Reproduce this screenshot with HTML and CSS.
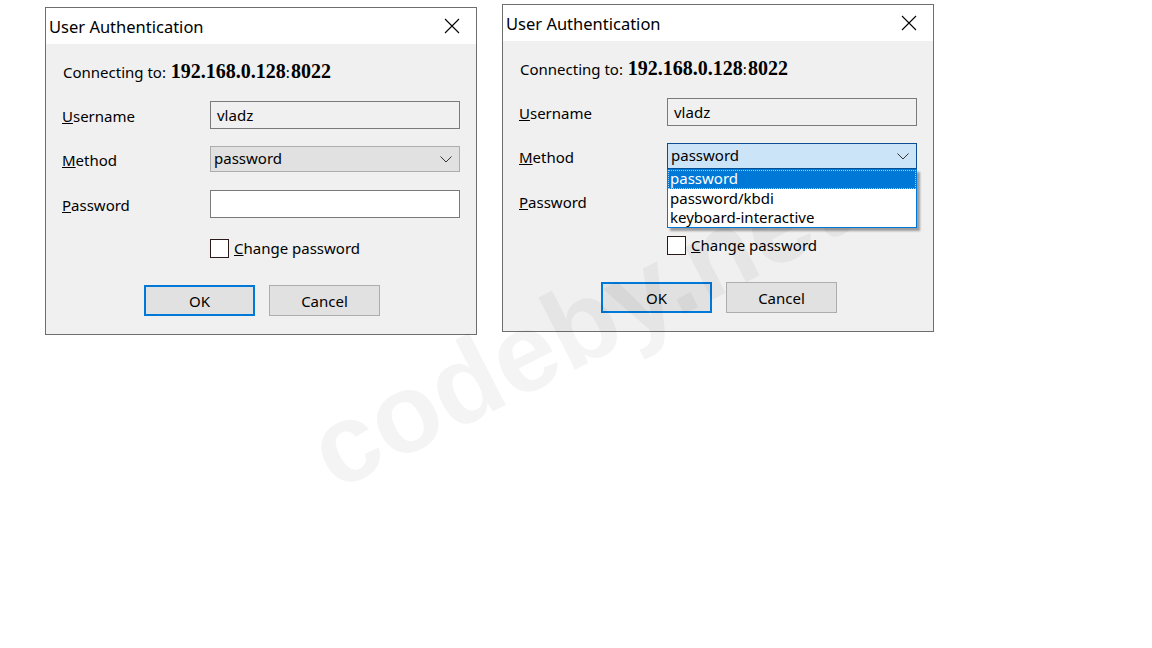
FILE: index.html
```html
<!DOCTYPE html>
<html>
<head>
<meta charset="utf-8">
<link rel="stylesheet" href="styles.css">
</head>
<body>
<div class="screen">
  <div class="dialog d1">
    <div class="titlebar">
      <span class="title">User Authentication</span>
      <svg class="close" width="16" height="16" viewBox="0 0 16 16"><path d="M1 1 L15 15 M15 1 L1 15" stroke="#000" stroke-width="1.1" fill="none"/></svg>
    </div>
    <div class="content">
      <div class="conn">Connecting to: <b>192.168.0.128</b>:<b>8022</b></div>
      <div class="row r-user"><label class="lbl"><u>U</u>sername</label><div class="field edit ro">vladz</div></div>
      <div class="row r-method"><label class="lbl"><u>M</u>ethod</label>
        <div class="field combo"><span>password</span>
          <svg class="chev" width="12" height="7" viewBox="0 0 12 7"><path d="M0.5 0.5 L6 6 L11.5 0.5" stroke="#333" stroke-width="1" fill="none"/></svg>
        </div>
      </div>
      <div class="row r-pass"><label class="lbl"><u>P</u>assword</label><div class="field edit wh"></div></div>
      <div class="checkrow"><span class="box"></span><span class="ctext"><u>C</u>hange password</span></div>
      <div class="buttons"><div class="btn default">OK</div><div class="btn">Cancel</div></div>
    </div>
  </div>

  <div class="dialog d2">
    <div class="titlebar">
      <span class="title">User Authentication</span>
      <svg class="close" width="16" height="16" viewBox="0 0 16 16"><path d="M1 1 L15 15 M15 1 L1 15" stroke="#000" stroke-width="1.1" fill="none"/></svg>
    </div>
    <div class="content">
      <div class="conn">Connecting to: <b>192.168.0.128</b>:<b>8022</b></div>
      <div class="row r-user"><label class="lbl"><u>U</u>sername</label><div class="field edit ro">vladz</div></div>
      <div class="row r-method"><label class="lbl"><u>M</u>ethod</label>
        <div class="field combo focus"><span>password</span>
          <svg class="chev" width="12" height="7" viewBox="0 0 12 7"><path d="M0.5 0.5 L6 6 L11.5 0.5" stroke="#333" stroke-width="1" fill="none"/></svg>
          <ul class="droplist">
            <li class="sel"><span>password</span></li>
            <li>password/kbdi</li>
            <li>keyboard-interactive</li>
          </ul>
        </div>
      </div>
      <div class="row r-pass"><label class="lbl"><u>P</u>assword</label><div class="field edit wh"></div></div>
      <div class="checkrow"><span class="box"></span><span class="ctext"><u>C</u>hange password</span></div>
      <div class="buttons"><div class="btn default">OK</div><div class="btn">Cancel</div></div>
    </div>
  </div>
</div>
<div class="watermark">codeby.net</div>
</body>
</html>
```

FILE: styles.css
```css
html, body {
  margin: 0;
  padding: 0;
  background: #fff;
}
body {
  width: 1152px;
  height: 648px;
  overflow: hidden;
  position: relative;
  font-family: "Noto Sans", "Open Sans", sans-serif;
  font-size: 15px;
  color: #000;
}
.screen {
  display: flex;
  align-items: flex-start;
  gap: 25px;
  padding-left: 45px;
}
.dialog {
  width: 430px;
  height: 326px;
  border: 1px solid #6e6e6e;
  background: #f0f0f0;
  display: flex;
  flex-direction: column;
}
.d1 { margin-top: 7px; }
.d2 { margin-top: 4px; }
.titlebar {
  height: 36px;
  background: #fff;
  display: flex;
  align-items: center;
  justify-content: space-between;
  padding-left: 3px;
  padding-right: 16px;
  flex: none;
}
.title {
  font-size: 16.5px;
}
.close { display: block; }
.content {
  padding-left: 16px;
  display: flex;
  flex-direction: column;
}
.conn {
  margin-top: 17px;
  height: 20px;
  line-height: 20px;
  padding-left: 1px;
}
.conn b {
  font-family: "Liberation Serif", serif;
  font-size: 20px;
  font-weight: bold;
  margin-left: 1px;
}
.row {
  display: flex;
  align-items: center;
}
.lbl {
  width: 148px;
  flex: none;
  position: relative;
  top: 1px;
}
.r-user { margin-top: 20px; height: 28px; }
.r-method { margin-top: 17px; height: 26px; }
.r-pass { margin-top: 18px; height: 28px; }
.field {
  width: 250px;
  box-sizing: border-box;
  height: 100%;
  display: flex;
  align-items: center;
}
.edit {
  border: 1px solid #7a7a7a;
  padding-left: 6px;
}
.edit.ro { background: #f0f0f0; }
.edit.wh { background: #fff; }
.combo {
  border: 1px solid #adadad;
  background: #e1e1e1;
  padding-left: 3px;
  justify-content: space-between;
  padding-right: 7px;
  position: relative;
}
.combo span { position: relative; top: -1px; }
.combo.focus {
  background: #cce4f7;
  border-color: #0a4f93;
}
.droplist {
  position: absolute;
  left: -1px;
  top: 25px;
  width: 250px;
  box-sizing: border-box;
  margin: 0;
  padding: 0;
  list-style: none;
  background: #fff;
  border: 1px solid #0078d7;
  box-shadow: 3px 3px 2px rgba(0,0,0,0.35);
  z-index: 2;
}
.droplist li {
  height: 19px;
  line-height: 19px;
  padding-left: 2px;
}
.droplist li.sel {
  background: #0078d7;
  color: #fff;
  outline: 1px dotted #a8cff0;
  outline-offset: -1px;
}
.checkrow {
  margin-top: 20px;
  padding-left: 148px;
  display: flex;
  align-items: center;
  height: 20px;
}
.box {
  width: 17px;
  height: 17px;
  border: 1px solid #2a1a1a;
  background: #fff;
  flex: none;
}
.ctext { margin-left: 5px; }
.buttons {
  margin-top: 27px;
  padding-left: 82px;
  display: flex;
  gap: 14px;
}
.btn {
  width: 109px;
  height: 29px;
  border: 1px solid #adadad;
  background: #e1e1e1;
  display: flex;
  align-items: center;
  justify-content: center;
}
.btn.default {
  width: 107px;
  height: 27px;
  border: 2px solid #0078d7;
}
.watermark {
  position: absolute;
  left: 318px;
  top: 402px;
  font-family: "Liberation Sans", Arial, sans-serif;
  font-weight: bold;
  font-size: 112px;
  line-height: 112px;
  color: rgba(0,0,0,0.045);
  transform: rotate(-27deg);
  transform-origin: left center;
  white-space: nowrap;
  pointer-events: none;
}
```
